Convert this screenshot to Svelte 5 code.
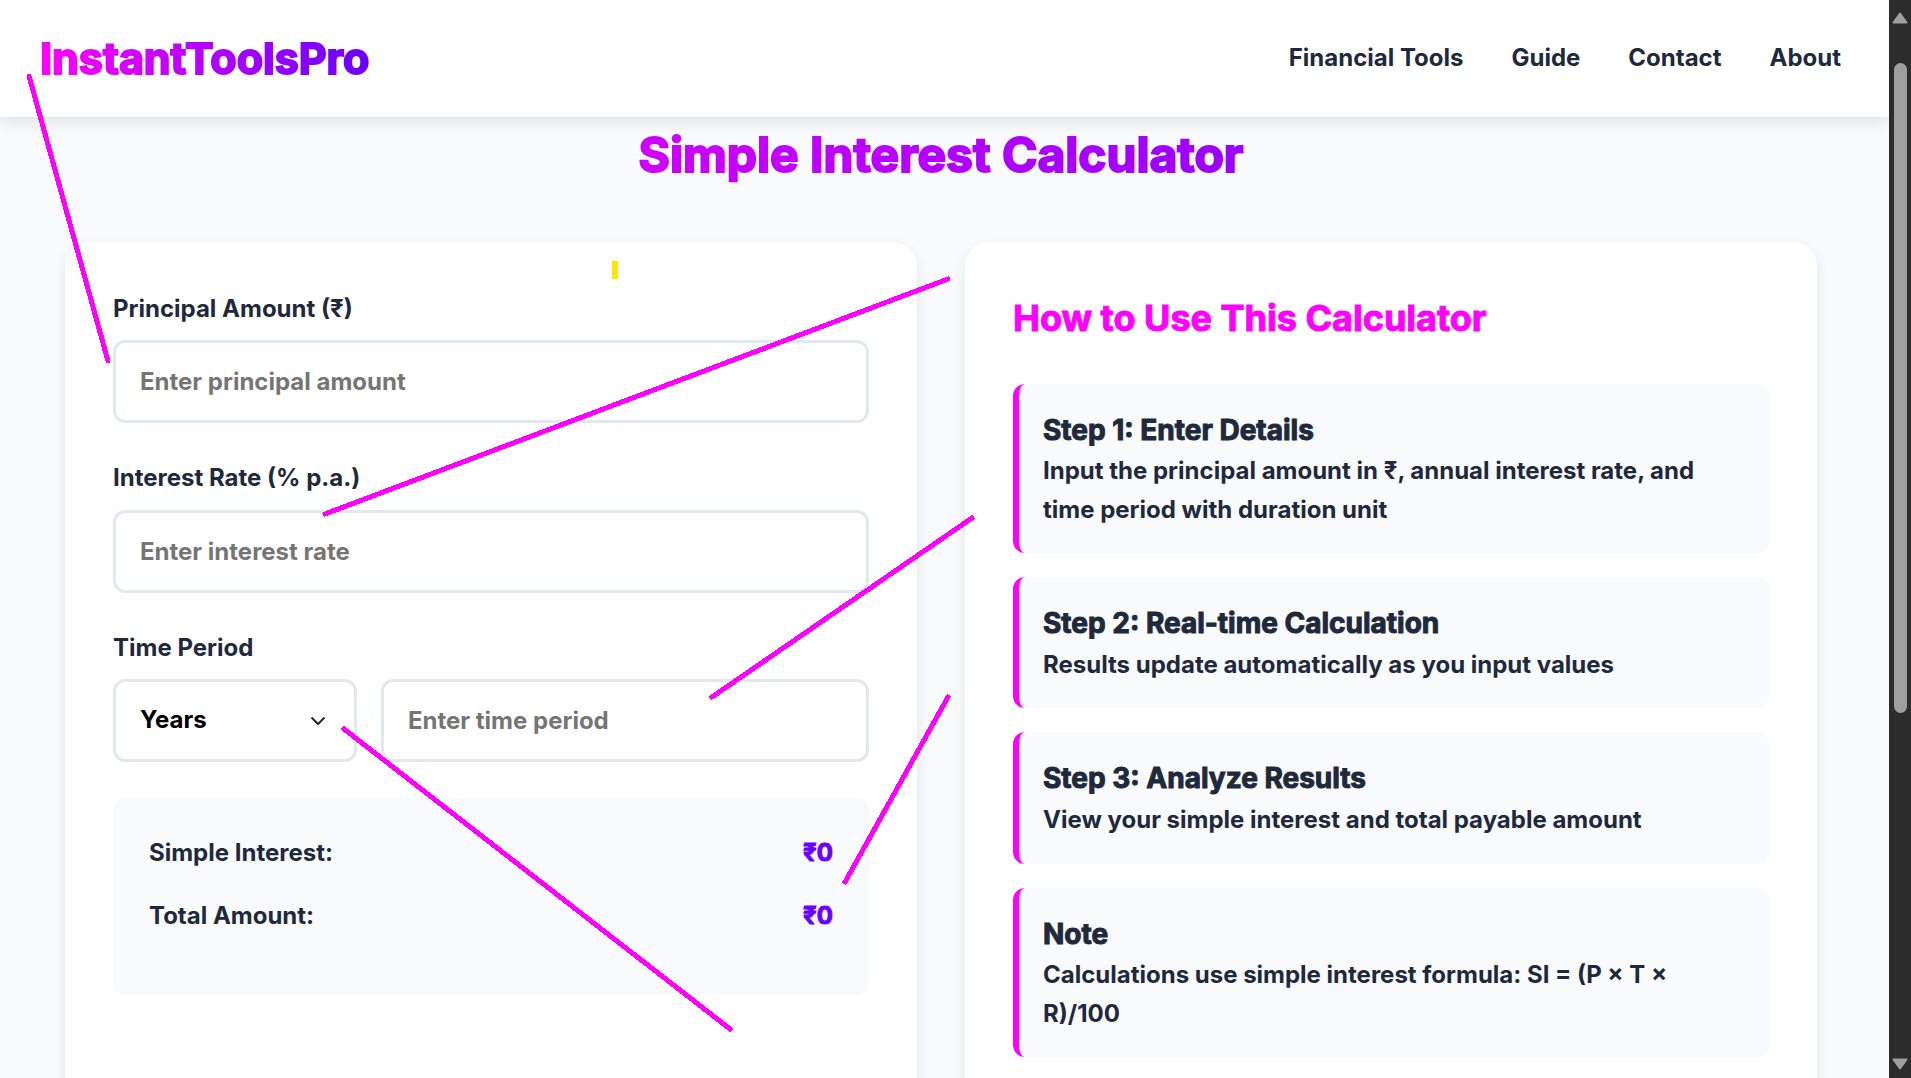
<script>
  let principal = $state('');
  let rate = $state('');
  let unit = $state('years');
  let time = $state('');

  const links = ['Financial Tools', 'Guide', 'Contact', 'About'];
  const steps = [
    { title: 'Step 1: Enter Details', text: 'Input the principal amount in ₹, annual interest rate, and time period with duration unit' },
    { title: 'Step 2: Real-time Calculation', text: 'Results update automatically as you input values' },
    { title: 'Step 3: Analyze Results', text: 'View your simple interest and total payable amount' },
    { title: 'Note', text: 'Calculations use simple interest formula: SI = (P × T × R)/100' }
  ];
  const strokes = [
    [29, 76, 108, 361],
    [325, 514, 948, 279],
    [712, 697, 972, 518],
    [845, 882, 948, 697],
    [344, 729, 730, 1029]
  ];

  const perYear = { years: 1, months: 12, days: 365 };
  let interest = $derived(((+principal || 0) * (+rate || 0) * ((+time || 0) / perYear[unit])) / 100);
  let total = $derived(interest ? (+principal || 0) + interest : 0);
  const money = (n) => '₹' + n.toLocaleString('en-IN', { maximumFractionDigits: 2 });
</script>

<div class="shell">
  <div class="page">
    <header>
      <a class="logo" href="#home">InstantToolsPro</a>
      <nav>
        {#each links as link}
          <a href="#{link.toLowerCase().replace(' ', '-')}">{link}</a>
        {/each}
      </nav>
    </header>

    <main>
      <h1>Simple Interest Calculator</h1>
      <div class="columns">
        <section class="card">
          <div class="field">
            <label for="principal">Principal Amount (₹)</label>
            <input id="principal" inputmode="decimal" placeholder="Enter principal amount" bind:value={principal} />
          </div>
          <div class="field">
            <label for="rate">Interest Rate (% p.a.)</label>
            <input id="rate" inputmode="decimal" placeholder="Enter interest rate" bind:value={rate} />
          </div>
          <div class="field">
            <label for="time">Time Period</label>
            <div class="period">
              <div class="select">
                <select aria-label="Duration unit" bind:value={unit}>
                  <option value="years">Years</option>
                  <option value="months">Months</option>
                  <option value="days">Days</option>
                </select>
                <svg viewBox="0 0 16 10" aria-hidden="true"><path d="M1.5 1.5 8 8l6.500-6.500" /></svg>
              </div>
              <input id="time" inputmode="decimal" placeholder="Enter time period" bind:value={time} />
            </div>
          </div>
          <div class="results">
            <div class="row"><span>Simple Interest:</span><output>{money(interest)}</output></div>
            <div class="row"><span>Total Amount:</span><output>{money(total)}</output></div>
          </div>
        </section>

        <section class="card">
          <h2>How to Use This Calculator</h2>
          <div class="steps">
            {#each steps as step}
              <article>
                <h3>{step.title}</h3>
                <p>{step.text}</p>
              </article>
            {/each}
          </div>
        </section>
      </div>
    </main>
  </div>

  <div class="scrollbar" aria-hidden="true">
    <svg viewBox="0 0 16 12"><path d="M8 1.500 14.500 10.500H1.500z" /></svg>
    <div class="track"><div class="thumb"></div></div>
    <svg viewBox="0 0 16 12"><path d="M8 10.500 14.500 1.500H1.500z" /></svg>
  </div>

  <svg class="marks" viewBox="0 0 1911 1078" preserveAspectRatio="xMinYMin meet" aria-hidden="true">
    {#each strokes as [x1, y1, x2, y2]}
      <line {x1} {y1} {x2} {y2} />
    {/each}
    <rect x="612" y="261" width="6" height="18" />
  </svg>
</div>

<style>
  :global(body) {
    background: #f8fafc;
  }
  .shell {
    position: relative;
    display: flex;
    height: 100vh;
    overflow: hidden;
    font-family: Inter, sans-serif;
    font-size: 24px;
    font-weight: 700;
    line-height: 1.6;
    color: #1e293b;
  }
  .page {
    flex: 1;
    min-width: 0;
    overflow: hidden;
    background: #f8fafc;
  }
  header {
    display: flex;
    align-items: center;
    justify-content: space-between;
    padding: 24px 48px 24px 40px;
    background: #fff;
    box-shadow: 0 6px 14px rgba(0, 0, 0, 0.09);
  }
  a {
    color: inherit;
    text-decoration: none;
  }
  .logo,
  h1 {
    background: linear-gradient(90deg, #ff00ff, #6a00ff);
    -webkit-background-clip: text;
    background-clip: text;
    color: transparent;
    font-weight: 700;
    -webkit-text-stroke: 2px transparent;
  }
  .logo {
    font-size: 43px;
    line-height: 69px;
  }
  nav {
    display: flex;
    gap: 48px;
  }
  main {
    padding: 0 72px 48px 65px;
  }
  h1,
  h2,
  h3,
  p {
    margin: 0;
  }
  h1 {
    margin-bottom: 50px;
    font-size: 48px;
    line-height: 75px;
    text-align: center;
  }
  .columns {
    display: grid;
    grid-template-columns: 1fr 1fr;
    gap: 48px;
  }
  .card {
    min-width: 0;
    padding: 48px;
    border-radius: 24px;
    background: #fff;
    box-shadow: 0 6px 14px rgba(0, 0, 0, 0.09);
  }
  .field {
    margin-bottom: 36px;
  }
  label {
    display: block;
    margin-bottom: 12px;
  }
  input,
  select {
    display: block;
    box-sizing: border-box;
    width: 100%;
    height: 83px;
    padding: 0 24px;
    border: 3px solid #e2e8f0;
    border-radius: 12px;
    background: #fff;
    color: #000;
    font: inherit;
    appearance: none;
  }
  input::placeholder {
    color: #757575;
    opacity: 1;
  }
  .period {
    display: grid;
    grid-template-columns: 1fr 2fr;
    gap: 24px;
  }
  .select {
    position: relative;
  }
  .select svg {
    position: absolute;
    top: 37px;
    right: 31px;
    width: 16px;
    height: 10px;
    fill: none;
    stroke: #1e293b;
    stroke-width: 2;
    pointer-events: none;
  }
  .results {
    padding: 36px;
    border-radius: 12px;
    background: #f8fafc;
  }
  .row {
    display: flex;
    justify-content: space-between;
    margin-bottom: 24px;
  }
  output {
    color: #6a00ff;
    -webkit-text-stroke: 1px #6a00ff;
  }
  h2 {
    margin-bottom: 36px;
    font-size: 36px;
    font-weight: 700;
    color: #ff00ff;
    -webkit-text-stroke: 1px #ff00ff;
  }
  .steps {
    display: grid;
    gap: 24px;
  }
  article {
    padding: 24px;
    border-left: 6px solid #ff00ff;
    border-radius: 12px;
    background: #f8fafc;
  }
  h3 {
    font-size: 28px;
    font-weight: 700;
    -webkit-text-stroke: 1px #1e293b;
  }
  .scrollbar {
    display: flex;
    flex: 0 0 22px;
    flex-direction: column;
    align-items: center;
    box-sizing: border-box;
    padding: 12px 0 8px;
    background: #2c2c2c;
  }
  .scrollbar svg {
    width: 16px;
    height: 12px;
    fill: #9f9f9f;
    stroke: #9f9f9f;
    stroke-width: 2;
    stroke-linejoin: round;
  }
  .track {
    flex: 1;
    padding: 39px 0;
  }
  .thumb {
    width: 13px;
    height: 68%;
    border-radius: 7px;
    background: #9f9f9f;
  }
  .marks {
    position: absolute;
    inset: 0;
    width: 100%;
    height: 100%;
    pointer-events: none;
    shape-rendering: crispEdges;
  }
  .marks line {
    stroke: #ff00ff;
    stroke-width: 5;
    stroke-linecap: round;
  }
  .marks rect {
    fill: #ffe600;
  }
</style>
